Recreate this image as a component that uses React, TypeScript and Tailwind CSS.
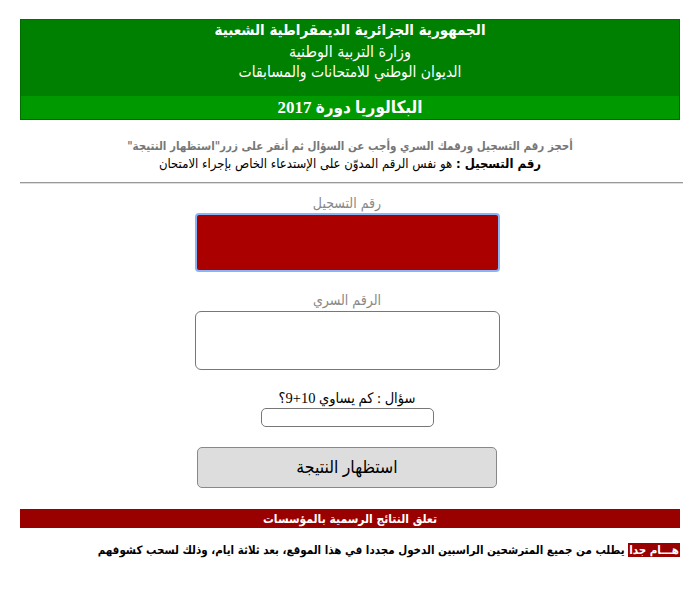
export default function App() {
  const sans = { fontFamily: '"DejaVu Sans Condensed", "Liberation Sans", "DejaVu Sans", Arial, sans-serif' }
  const serif = { fontFamily: '"Liberation Serif", "DejaVu Sans Condensed", "DejaVu Sans", serif' }

  return (
    <div className="w-[683px] h-[594px] overflow-hidden bg-white" style={sans}>
      <div dir="rtl" className="ml-[20px] w-[660px] pt-[19px]">
        {/* Header */}
        <div className="border border-[#006f00]">
          <div className="bg-[#008000] h-[76px] flex flex-col items-center text-white leading-[21px]">
            <div className="font-bold text-[15px]">الجمهورية الجزائرية الديمقراطية الشعبية</div>
            <div className="text-[16px]">وزارة التربية الوطنية</div>
            <div className="text-[15.5px]">الديوان الوطني للامتحانات والمسابقات</div>
          </div>
          <div className="bg-[#009900] h-[23px] flex items-center justify-center text-white text-[17px] font-bold" style={serif}>
            البكالوريا دورة 2017
          </div>
        </div>

        {/* Instructions */}
        <div className="mt-[17px] text-center leading-[18px]">
          <div className="font-bold text-[11.5px] text-[#777]">أحجز رقم التسجيل ورقمك السري وأجب عن السؤال ثم أنقر على زرر"استظهار النتيجة"</div>
          <div className="text-[13px] text-black">
            <span className="font-bold">رقم التسجيل :</span> هو نفس الرقم المدوّن على الإستدعاء الخاص بإجراء الامتحان
          </div>
        </div>
      </div>

      <div className="mt-[9px] ml-[20px] w-[663px] h-[2px] border-t border-[#999] border-b border-b-[#ddd]" />

      <div dir="rtl" className="ml-[20px] w-[660px]">
        {/* Form */}
        <div className="pr-[6px] flex flex-col items-center">
          <div className="mt-[11px] text-[14px] leading-[17px] text-[#888]">رقم التسجيل</div>
          <div className="mt-[1px] w-[305px] h-[59px] rounded-[4px] bg-[#aa0000] border-2 border-[#8ab4f8]" />

          <div className="mt-[20px] text-[14px] leading-[17px] text-[#888]">الرقم السري</div>
          <div className="mt-[2px] w-[305px] h-[59px] rounded-[6px] bg-white border border-[#777]" />

          <div className="mt-[19px] text-[14.5px] leading-[19px] text-black" style={serif}>سؤال : كم يساوي 10+9؟</div>
          <div className="w-[173px] h-[19px] rounded-[5px] bg-white border border-[#777]" />

          <div className="mt-[20px] w-[300px] h-[41px] rounded-[5px] bg-[#dddddd] border border-[#888] flex items-center justify-center text-[17.5px] text-black" style={serif}>
            استظهار النتيجة
          </div>
        </div>

        <div className="mt-[21px] h-[19px] bg-[#990000] flex items-center justify-center text-white text-[12px] font-bold">
          تعلق النتائج الرسمية بالمؤسسات
        </div>

        <div className="mt-[14px] text-[11.5px] font-bold text-black leading-[16px] whitespace-nowrap">
          <span className="bg-[#990000] text-white px-[1px]">هـــام جدا</span> يطلب من جميع المترشحين الراسبين الدخول مجددا في هذا الموقع، بعد ثلاثة ايام، وذلك لسحب كشوفهم
        </div>
      </div>
    </div>
  )
}
